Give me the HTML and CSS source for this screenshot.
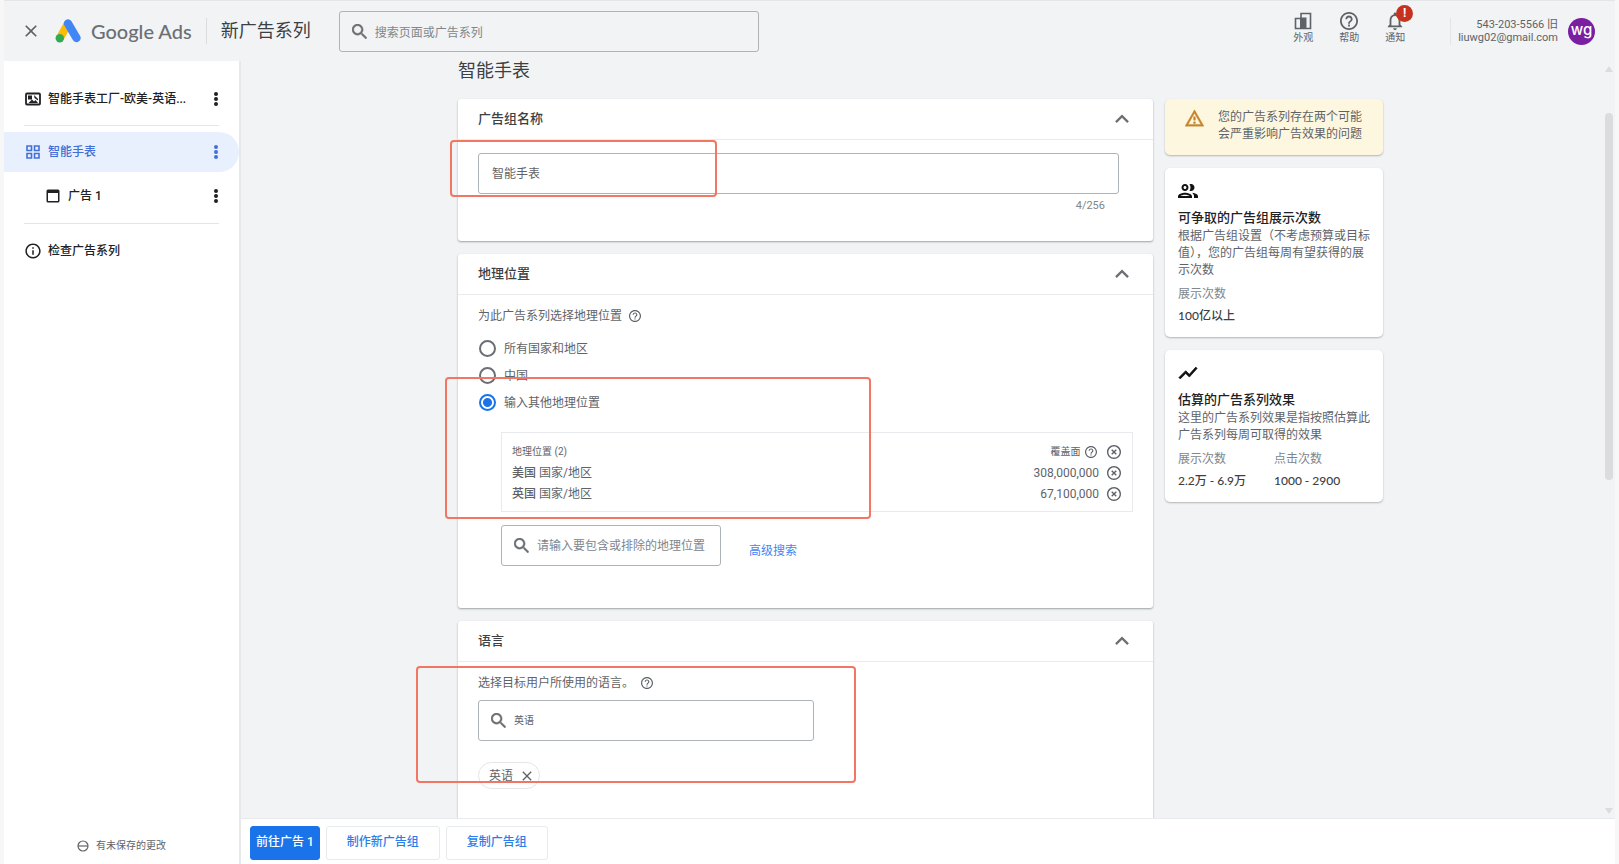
FILE: index.html
```html
<!DOCTYPE html>
<html lang="zh-CN">
<head>
<meta charset="utf-8">
<meta name="viewport" content="width=device-width, initial-scale=1">
<title>新广告系列 - Google Ads</title>
<link rel="stylesheet" href="styles.css">
</head>
<body>
<svg class="sprite" aria-hidden="true">
  <symbol id="i-close" viewBox="0 0 24 24"><path d="M19 6.41L17.59 5 12 10.59 6.41 5 5 6.41 10.59 12 5 17.59 6.41 19 12 13.41 17.59 19 19 17.59 13.41 12z"/></symbol>
  <symbol id="i-search" viewBox="3 3 17.5 17.5"><path d="M15.5 14h-.79l-.28-.27C15.41 12.59 16 11.11 16 9.5 16 5.91 13.09 3 9.5 3S3 5.91 3 9.5 5.91 16 9.5 16c1.61 0 3.09-.59 4.23-1.57l.27.28v.79l5 4.99L20.49 19l-4.99-5zm-6 0C7.01 14 5 11.99 5 9.5S7.01 5 9.5 5 14 7.01 14 9.5 11.99 14 9.5 14z" stroke="currentColor" stroke-width=".5"/></symbol>
  <symbol id="i-help" viewBox="2 2 20 20"><path d="M11 18h2v-2h-2v2zm1-16C6.48 2 2 6.48 2 12s4.48 10 10 10 10-4.48 10-10S17.52 2 12 2zm0 18c-4.41 0-8-3.59-8-8s3.59-8 8-8 8 3.59 8 8-3.59 8-8 8zm0-14c-2.21 0-4 1.79-4 4h2c0-1.1.9-2 2-2s2 .9 2 2c0 2-3 1.75-3 5h2c0-2.25 3-2.5 3-5 0-2.21-1.79-4-4-4z"/></symbol>
  <symbol id="i-remove" viewBox="2 2 20 20"><path d="M14.59 8L12 10.59 9.41 8 8 9.41 10.59 12 8 14.59 9.41 16 12 13.41 14.59 16 16 14.59 13.41 12 16 9.41 14.59 8zM12 2C6.47 2 2 6.47 2 12s4.47 10 10 10 10-4.47 10-10S17.53 2 12 2zm0 18c-4.41 0-8-3.59-8-8s3.59-8 8-8 8 3.59 8 8-3.59 8-8 8z"/></symbol>
  <symbol id="i-up" viewBox="5 5 14 14"><path d="M12 8l-6 6 1.41 1.41L12 10.83l4.59 4.58L18 14z"/></symbol>
  <symbol id="i-more" viewBox="0 0 6 16"><circle cx="3" cy="3" r="2"/><circle cx="3" cy="8" r="2"/><circle cx="3" cy="13" r="2"/></symbol>
</svg>

<div class="app">
  <header class="topbar">
    <button class="bare close" aria-label="关闭"><svg width="20" height="20"><use href="#i-close"/></svg></button>
    <svg class="logo" width="26" height="24" viewBox="0 0 26 24" aria-hidden="true">
      <path d="M13 4.5L5 19" stroke="#fbbc04" stroke-width="8" fill="none"/>
      <path d="M13 4.5L21.500 19" stroke="#4285f4" stroke-width="8.400" stroke-linecap="round" fill="none"/>
      <circle cx="4.800" cy="19.200" r="4.200" fill="#34a853"/>
    </svg>
    <span class="brand">Google Ads</span>
    <h1 class="page-name">新广告系列</h1>
    <label class="field top-search">
      <svg width="15" height="15"><use href="#i-search"/></svg>
      <input type="text" placeholder="搜索页面或广告系列" aria-label="搜索页面或广告系列">
    </label>
    <nav class="tools">
      <button class="bare tool">
        <svg width="18" height="18" viewBox="0 0 18 18"><path d="M7 6V1.500h9.500v15h-15V6.500H6" fill="none" stroke="currentColor" stroke-width="1.600"/><path d="M6 5.500h6.500v11H6z"/></svg>
        <span>外观</span>
      </button>
      <button class="bare tool">
        <svg width="18" height="18"><use href="#i-help"/></svg>
        <span>帮助</span>
      </button>
      <button class="bare tool">
        <svg width="18" height="18" viewBox="3 2 18 20"><path d="M12 22c1.100 0 2-.9 2-2h-4c0 1.100.9 2 2 2zm6-6v-5c0-3.070-1.630-5.640-4.500-6.320V4c0-.83-.67-1.500-1.500-1.500s-1.500.67-1.500 1.500v.68C7.640 5.360 6 7.920 6 11v5l-2 2v1h16v-1l-2-2zm-2 1H8v-6c0-2.480 1.510-4.500 4-4.500s4 2.020 4 4.500v6z"/></svg>
        <span>通知</span>
        <b class="alert">!</b>
      </button>
    </nav>
    <div class="account">
      <p>543-203-5566 旧<br>liuwg02@gmail.com</p>
      <span class="avatar">wg</span>
    </div>
  </header>

  <div class="body">
    <aside class="sidebar">
      <ul class="nav">
        <li class="nav-row">
          <svg width="16" height="16" viewBox="0 0 16 16"><rect x="1" y="2.500" width="14" height="11" rx="1" fill="none" stroke="currentColor" stroke-width="1.800"/><path d="M3 4.500h4v4H3zM9 4l4 4v1.500L9.500 7zM3.500 12L7 8.500l2 2 1.500-1.500 2.500 3z"/></svg>
          <a href="#">智能手表工厂-欧美-英语...</a>
          <button class="bare" aria-label="更多"><svg width="6" height="16"><use href="#i-more"/></svg></button>
        </li>
        <li class="rule"></li>
        <li class="nav-row active">
          <svg width="16" height="16" viewBox="0 0 16 16"><g fill="none" stroke="currentColor" stroke-width="1.600"><path d="M2 2h4.500v4.500H2zM9.500 2H14v4.500H9.500zM2 9.500h4.500V14H2zM9.500 9.500H14V14H9.500z"/></g></svg>
          <a href="#">智能手表</a>
          <button class="bare" aria-label="更多"><svg width="6" height="16"><use href="#i-more"/></svg></button>
        </li>
        <li class="nav-row child">
          <svg width="16" height="16" viewBox="0 0 16 16"><path d="M3 1.500h10A1.500 1.500 0 0 1 14.500 3v10a1.500 1.500 0 0 1-1.500 1.500H3A1.500 1.500 0 0 1 1.500 13V3A1.500 1.500 0 0 1 3 1.500zM3 5v8h10V5z" fill-rule="evenodd"/></svg>
          <a href="#">广告 1</a>
          <button class="bare" aria-label="更多"><svg width="6" height="16"><use href="#i-more"/></svg></button>
        </li>
        <li class="rule"></li>
        <li class="nav-row">
          <svg width="16" height="16" viewBox="1.500 1.500 21 21"><path d="M11 7h2v2h-2zm0 4h2v6h-2zm1-9C6.480 2 2 6.480 2 12s4.480 10 10 10 10-4.480 10-10S17.520 2 12 2zm0 18c-4.410 0-8-3.590-8-8s3.590-8 8-8 8 3.590 8 8-3.590 8-8 8z"/></svg>
          <a href="#">检查广告系列</a>
        </li>
      </ul>
      <p class="status">
        <svg width="12" height="12" viewBox="0 0 12 12"><circle cx="6" cy="6" r="5" fill="none" stroke="currentColor" stroke-width="1.200"/><path d="M1 5.400h10v1.200H1z"/></svg>
        有未保存的更改
      </p>
    </aside>

    <div class="work">
      <main class="scroll">
        <h2 class="title">智能手表</h2>
        <div class="columns">
          <div class="stack">
            <section class="card name-card">
              <header class="card-head"><h3>广告组名称</h3><button class="bare" aria-label="收起"><svg width="16" height="16"><use href="#i-up"/></svg></button></header>
              <div class="card-body">
                <input class="field name-input" type="text" value="智能手表" aria-label="广告组名称">
                <p class="counter">4/256</p>
              </div>
              <div class="mark mark-name"></div>
            </section>

            <section class="card place-card">
              <header class="card-head"><h3>地理位置</h3><button class="bare" aria-label="收起"><svg width="16" height="16"><use href="#i-up"/></svg></button></header>
              <div class="card-body">
                <p class="hint">为此广告系列选择地理位置 <svg width="12" height="12"><use href="#i-help"/></svg></p>
                <div class="radios">
                  <label><input type="radio" name="place">所有国家和地区</label>
                  <label><input type="radio" name="place">中国</label>
                  <label><input type="radio" name="place" checked>输入其他地理位置</label>
                </div>
                <div class="indent">
                  <div class="places">
                    <table>
                      <thead>
                        <tr><th>地理位置 (2)</th><th class="num">覆盖面 <svg width="12" height="12"><use href="#i-help"/></svg></th><th class="del"><button class="bare" aria-label="全部移除"><svg width="14" height="14"><use href="#i-remove"/></svg></button></th></tr>
                      </thead>
                      <tbody>
                        <tr><td><b>美国</b> 国家/地区</td><td class="num">308,000,000</td><td class="del"><button class="bare" aria-label="移除美国"><svg width="14" height="14"><use href="#i-remove"/></svg></button></td></tr>
                        <tr><td><b>英国</b> 国家/地区</td><td class="num">67,100,000</td><td class="del"><button class="bare" aria-label="移除英国"><svg width="14" height="14"><use href="#i-remove"/></svg></button></td></tr>
                      </tbody>
                    </table>
                  </div>
                  <div class="find">
                    <label class="field place-search">
                      <svg width="15" height="15"><use href="#i-search"/></svg>
                      <input type="text" placeholder="请输入要包含或排除的地理位置" aria-label="请输入要包含或排除的地理位置">
                    </label>
                    <a href="#">高级搜索</a>
                  </div>
                </div>
              </div>
              <div class="mark mark-place"></div>
            </section>

            <section class="card lang-card">
              <header class="card-head"><h3>语言</h3><button class="bare" aria-label="收起"><svg width="16" height="16"><use href="#i-up"/></svg></button></header>
              <div class="card-body">
                <p class="hint">选择目标用户所使用的语言。 <svg width="12" height="12"><use href="#i-help"/></svg></p>
                <label class="field lang-search">
                  <svg width="15" height="15"><use href="#i-search"/></svg>
                  <input type="text" value="英语" aria-label="语言">
                </label>
                <span class="chip">英语 <button class="bare" aria-label="移除英语"><svg width="16" height="16"><use href="#i-close"/></svg></button></span>
              </div>
              <div class="mark mark-lang"></div>
            </section>
          </div>

          <div class="stack insights">
            <section class="tile warn">
              <svg width="19" height="18" viewBox="1 1 22 21"><path d="M12 5.990L19.530 19H4.470L12 5.990M12 2L1 21h22L12 2zm1 14h-2v2h2v-2zm0-6h-2v4h2v-4z" stroke="currentColor" stroke-width=".5"/></svg>
              <p>您的广告系列存在两个可能会严重影响广告效果的问题</p>
            </section>
            <section class="tile">
              <svg width="20" height="20" viewBox="2 2 20 20"><path d="M9 13.750c-2.340 0-7 1.170-7 3.500V19h14v-1.750c0-2.330-4.660-3.500-7-3.500zM4.340 17c.84-.58 2.870-1.250 4.660-1.250s3.820.67 4.660 1.250H4.340zM9 12c1.930 0 3.500-1.570 3.500-3.500S10.930 5 9 5 5.500 6.570 5.500 8.500 7.070 12 9 12zm0-5c.83 0 1.500.67 1.500 1.500S9.830 10 9 10s-1.500-.67-1.500-1.500S8.170 7 9 7zm7.040 6.810c1.160.84 1.960 1.960 1.960 3.440V19h4v-1.750c0-2.020-3.500-3.170-5.960-3.440zM15 12c1.930 0 3.500-1.570 3.500-3.500S16.930 5 15 5c-.54 0-1.040.13-1.500.35.63.89 1 1.980 1 3.150s-.37 2.260-1 3.150c.46.22.96.35 1.500.35z"/></svg>
              <h4>可争取的广告组展示次数</h4>
              <p>根据广告组设置（不考虑预算或目标值），您的广告组每周有望获得的展示次数</p>
              <dl><div><dt>展示次数</dt><dd>100亿以上</dd></div></dl>
            </section>
            <section class="tile">
              <svg width="20" height="20" viewBox="1 1 22 22"><path d="M3.500 18.490l6-6.010 4 4L22 6.920l-1.410-1.410-7.090 7.970-4-4L2 16.990z" stroke="currentColor" stroke-width=".8"/></svg>
              <h4>估算的广告系列效果</h4>
              <p>这里的广告系列效果是指按照估算此广告系列每周可取得的效果</p>
              <dl><div><dt>展示次数</dt><dd>2.2万 - 6.9万</dd></div><div><dt>点击次数</dt><dd>1000 - 2900</dd></div></dl>
            </section>
          </div>
        </div>
        <div class="bar" aria-hidden="true">
          <svg width="8" height="6" viewBox="0 0 8 6"><path d="M4 0l4 6H0z"/></svg>
          <span class="thumb"></span>
          <svg width="8" height="6" viewBox="0 0 8 6"><path d="M0 0h8L4 6z"/></svg>
        </div>
      </main>
      <footer class="actions">
        <button class="btn primary">前往广告 1</button>
        <button class="btn">制作新广告组</button>
        <button class="btn">复制广告组</button>
      </footer>
    </div>
  </div>
</div>
</body>
</html>
```
FILE: styles.css
```css
* { box-sizing: border-box; }

body {
  margin: 0;
  background: #f7f7f7;
  color: #5f6368;
  font: 12px/16px Roboto, "Noto Sans CJK SC", sans-serif;
}

h1, h2, h3, h4, p, ul, dl, dd { margin: 0; padding: 0; }
ul { list-style: none; }
a { color: inherit; text-decoration: none; }
svg { display: block; flex: none; fill: currentColor; }
.sprite { position: absolute; width: 0; height: 0; }

input { font: inherit; color: inherit; }
input::placeholder { color: #80868b; opacity: 1; }

.bare {
  display: flex;
  align-items: center;
  padding: 0;
  border: 0;
  background: none;
  color: inherit;
  font: inherit;
}

.app {
  display: flex;
  flex-direction: column;
  height: 100vh;
  margin: 0 4px;
  border-top: 1px solid #e4e5e6;
  background: #f1f3f4;
  overflow: hidden;
}

/* Top bar */
.topbar {
  display: flex;
  flex: none;
  align-items: center;
  height: 60px;
  padding-right: 20px;
}
.close { margin: 0 14px 0 17px; }
.brand {
  margin-left: 10px;
  color: #6b6f74;
  font: 500 20px/28px Lato, "Noto Sans CJK SC", sans-serif;
}
.page-name {
  margin-left: 14px;
  padding-left: 14px;
  border-left: 1px solid #dadce0;
  color: #3c4043;
  font-size: 18px;
  font-weight: 400;
  line-height: 26px;
}

.field {
  display: flex;
  align-items: center;
  height: 41px;
  border: 1px solid #aeb3b7;
  border-radius: 3px;
}
.field svg { color: #6b6f74; }
.field input {
  flex: 1;
  min-width: 0;
  padding: 0;
  border: 0;
  outline: 0;
  background: none;
}
.top-search {
  flex: 0 1 420px;
  gap: 8px;
  margin-left: 28px;
  padding: 0 12px;
}
.top-search input { padding-top: 3px; }

.tools {
  display: flex;
  gap: 26px;
  margin-left: auto;
  padding-bottom: 5px;
}
.tool {
  position: relative;
  flex-direction: column;
  font-size: 10px;
}
.alert {
  position: absolute;
  top: -7px;
  left: 11px;
  width: 17px;
  height: 17px;
  border-radius: 50%;
  background: #c5321f;
  color: #fff;
  font-size: 12px;
  line-height: 17px;
  text-align: center;
}
.account {
  display: flex;
  align-items: center;
  gap: 10px;
  margin-left: 45px;
  padding-left: 7px;
  border-left: 1px solid #e3e5e8;
}
.account p {
  font-size: 11px;
  line-height: 13px;
  text-align: right;
}
.avatar {
  width: 27px;
  height: 27px;
  border-radius: 50%;
  background: #7b1fa2;
  color: #fff;
  font: 500 15px/24px Inter, sans-serif;
  text-align: center;
}

.body {
  display: flex;
  flex: 1;
  min-height: 0;
}

/* Sidebar */
.sidebar {
  display: flex;
  flex: none;
  flex-direction: column;
  justify-content: space-between;
  width: 235px;
  padding-top: 18px;
  background: #fff;
  color: #202124;
}
.nav-row {
  display: flex;
  align-items: center;
  gap: 7px;
  height: 40px;
  padding: 0 20px 0 21px;
  font-weight: 500;
}
.nav-row button { margin-left: auto; }
.nav-row.active {
  border-radius: 0 20px 20px 0;
  background: #e8f0fe;
  color: #4270d8;
}
.nav-row.child {
  height: 48px;
  padding-left: 41px;
}
.rule {
  height: 1px;
  margin: 6px 20px;
  background: #e3e5e8;
}
.child + .rule { margin: 3px 20px 7px; }
.status {
  display: flex;
  align-items: center;
  justify-content: center;
  gap: 7px;
  padding-bottom: 10px;
  color: #5f6368;
  font-size: 10px;
}

/* Work area */
.work {
  display: flex;
  flex: 1;
  flex-direction: column;
  min-width: 0;
  border-left: 2px solid #e6e8ea;
}
.scroll {
  position: relative;
  flex: 1;
  min-height: 0;
  padding-left: 217px;
  overflow: hidden;
}
.title {
  margin-bottom: 18px;
  color: #3c4043;
  font-size: 18px;
  font-weight: 400;
  line-height: 20px;
}
.columns {
  display: grid;
  grid-template-columns: minmax(0, 695px) 218px;
  gap: 12px;
}
.stack {
  display: flex;
  flex-direction: column;
  gap: 13px;
}

.card {
  position: relative;
  border-radius: 3px;
  background: #fff;
  box-shadow: 0 1px 2px rgba(60, 64, 67, .45);
}
.card-head {
  display: flex;
  align-items: center;
  justify-content: space-between;
  height: 41px;
  padding: 0 23px 0 20px;
  border-bottom: 1px solid #e8eaed;
}
.card-head h3 {
  color: #3c4043;
  font-size: 13px;
  font-weight: 500;
}
.card-head svg { color: #6b6f74; }
.card-body { padding: 13px 20px 0; }

.name-card { min-height: 142px; }
.name-input {
  width: calc(100% - 14px);
  padding: 0 13px 2px;
}
.counter {
  padding: 4px 28px 0 0;
  color: #80868b;
  font-size: 11px;
  text-align: right;
}

.hint {
  display: flex;
  align-items: center;
  gap: 7px;
}
.place-card { min-height: 354px; }
.radios {
  display: flex;
  flex-direction: column;
  margin-top: 11px;
}
.radios label {
  display: flex;
  align-items: center;
  gap: 7px;
  height: 27px;
}
.radios input {
  width: 17px;
  height: 17px;
  margin: 0 1px;
  border: 2px solid #6b6f74;
  border-radius: 50%;
  background: #fff;
  appearance: none;
}
.radios input:checked {
  border-color: #1a73e8;
  background: radial-gradient(circle, #1a73e8 4px, #fff 5px);
}
.indent { padding-left: 23px; }
.places {
  margin-top: 16px;
  padding: 8px 11px 7px 10px;
  border: 1px solid #e8eaed;
}
.places table {
  width: 100%;
  border-collapse: collapse;
}
.places th, .places td {
  height: 21px;
  padding: 0;
  font-weight: 400;
  text-align: left;
}
.places th { font-size: 10px; }
.places td b { font-weight: 500; }
.places .num {
  width: 120px;
  text-align: right;
}
.places .num svg {
  display: inline-block;
  margin: 0 2px;
  vertical-align: middle;
}
.places .del {
  width: 22px;
  padding-left: 8px;
}
.find {
  display: flex;
  align-items: center;
  gap: 28px;
  margin-top: 13px;
}
.find a { padding-top: 10px; color: #4285f4; }
.place-search {
  width: 220px;
  gap: 8px;
  padding: 0 12px;
}

.lang-card { min-height: 260px; }
.lang-search {
  width: 336px;
  gap: 8px;
  margin-top: 9px;
  padding: 0 12px;
  font-size: 10px;
}
.chip {
  display: inline-flex;
  align-items: center;
  gap: 6px;
  height: 27px;
  margin-top: 21px;
  padding: 0 4px 0 10px;
  border: 1px solid #e3e5e8;
  border-radius: 14px;
}

/* Highlight frames drawn over the form */
.mark {
  position: absolute;
  border: 2px solid #f27663;
  border-radius: 4px;
  pointer-events: none;
}
.mark-name { top: 41px; left: -8px; width: 267px; height: 57px; }
.mark-place { top: 123px; left: -13px; width: 426px; height: 142px; }
.mark-lang { top: 45px; left: -42px; width: 440px; height: 117px; }

/* Insight tiles */
.tile {
  padding: 13px;
  border-radius: 5px;
  background: #fff;
  line-height: 17px;
  box-shadow: 0 1px 2px rgba(60, 64, 67, .35);
}
.tile > svg { color: #111; }
.tile h4 {
  margin-top: 7px;
  color: #202124;
  font-size: 13px;
  font-weight: 500;
  line-height: 20px;
}
.tile dl {
  display: grid;
  grid-template-columns: 1fr 1fr;
  margin-top: 7px;
}
.tile dt { color: #80868b; }
.tile dd {
  margin-top: 4px;
  color: #3c4043;
  font-family: Lato, "Noto Sans CJK SC", sans-serif;
  font-weight: 500;
}
.tile.warn {
  display: flex;
  align-items: flex-start;
  gap: 14px;
  padding: 10px 20px 12px;
  background: #fef7e0;
}
.tile.warn svg { color: #c5842b; }

.bar {
  position: absolute;
  top: 5px;
  right: 2px;
  bottom: 4px;
  display: flex;
  flex-direction: column;
  align-items: center;
  color: #dadce0;
}
.thumb {
  width: 8px;
  height: 49%;
  margin: 41px 0 auto;
  border-radius: 4px;
  background: #dadce0;
}

/* Bottom actions */
.actions {
  display: flex;
  flex: none;
  gap: 6px;
  height: 46px;
  padding: 7px 9px 4px;
  border-top: 1px solid #e8eaed;
  background: #fff;
}
.btn {
  padding: 0 20px 2px;
  border: 1px solid #e8eaed;
  border-radius: 3px;
  background: #fff;
  color: #2b7de9;
  font: 500 12px/16px Roboto, "Noto Sans CJK SC", sans-serif;
}
.btn.primary {
  padding: 0 5px 2px;
  border-color: #1a73e8;
  background: #1a73e8;
  color: #fff;
}
```
